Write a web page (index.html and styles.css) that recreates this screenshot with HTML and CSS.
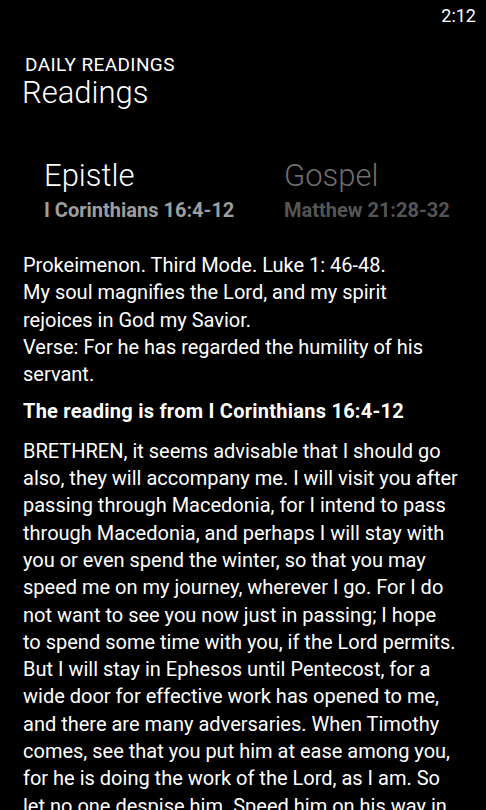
FILE: index.html
```html
<!DOCTYPE html>
<html lang="en">
<head>
    <meta charset="UTF-8">
    <meta name="viewport" content="width=device-width, initial-scale=1.0">
    <title>Daily Readings</title>
    <link rel="stylesheet" href="styles.css">
</head>
<body>
    <div class="status-bar">
        <span class="time">2:12</span>
    </div>

    <div class="header">
        <div class="app-title">DAILY READINGS</div>
        <div class="page-title">Readings</div>
    </div>

    <div class="pivot">
        <div class="pivot-item active">
            <div class="pivot-name">Epistle</div>
            <div class="pivot-ref">I Corinthians 16:4-12</div>
        </div>
        <div class="pivot-item">
            <div class="pivot-name">Gospel</div>
            <div class="pivot-ref">Matthew 21:28-32</div>
        </div>
    </div>

    <div class="reading">
        <p class="prokeimenon">
            Prokeimenon. Third Mode. Luke 1: 46-48.<br>
            My soul magnifies the Lord, and my spirit<br>
            rejoices in God my Savior.<br>
            Verse: For he has regarded the humility of his<br>
            servant.
        </p>

        <p class="reading-title">The reading is from I Corinthians 16:4-12</p>

        <p class="reading-text">
            BRETHREN, it seems advisable that I should go<br>
            also, they will accompany me. I will visit you after<br>
            passing through Macedonia, for I intend to pass<br>
            through Macedonia, and perhaps I will stay with<br>
            you or even spend the winter, so that you may<br>
            speed me on my journey, wherever I go. For I do<br>
            not want to see you now just in passing; I hope<br>
            to spend some time with you, if the Lord permits.<br>
            But I will stay in Ephesos until Pentecost, for a<br>
            wide door for effective work has opened to me,<br>
            and there are many adversaries. When Timothy<br>
            comes, see that you put him at ease among you,<br>
            for he is doing the work of the Lord, as I am. So<br>
            let no one despise him. Speed him on his way in<br>
            peace, that he may return to me; for I am<br>
            expecting him with the brethren.
        </p>
    </div>
</body>
</html>
```

FILE: styles.css
```css
html, body {
    height: 100%;
    overflow: hidden;
}
body {
    margin: 0;
    background-color: #000;
    color: #fff;
    font-family: Roboto, "Open Sans", sans-serif;
}

.status-bar {
    height: 32px;
    display: flex;
    justify-content: flex-end;
    align-items: center;
    padding-right: 10px;
}
.time {
    font-size: 18px;
    line-height: 24px;
}

.header {
    padding-left: 25px;
    margin-top: 22px;
}
.app-title {
    font-size: 19px;
    line-height: 22px;
    letter-spacing: 0.4px;
}
.page-title {
    font-size: 31px;
    line-height: 34px;
    font-weight: 300;
    margin-left: -3px;
}

.pivot {
    display: grid;
    grid-template-columns: 240px auto;
    padding-left: 44px;
    margin-top: 47px;
}
.pivot-name {
    font-size: 31px;
    line-height: 38px;
    font-weight: 300;
    color: #6e6e6e;
}
.pivot-ref {
    font-size: 20px;
    line-height: 26px;
    font-weight: bold;
    color: #555;
    margin-top: 2px;
}
.pivot-item.active .pivot-name {
    color: #fff;
}
.pivot-item.active .pivot-ref {
    color: #9e9e9e;
}

.reading {
    padding: 0 6px 0 23px;
    margin-top: 29px;
}
.reading p {
    margin: 0 0 10px;
    font-size: 20px;
    line-height: 27.3px;
    white-space: nowrap;
}
.reading .reading-title {
    font-weight: bold;
    letter-spacing: 0.25px;
    margin-bottom: 12px;
}
```
